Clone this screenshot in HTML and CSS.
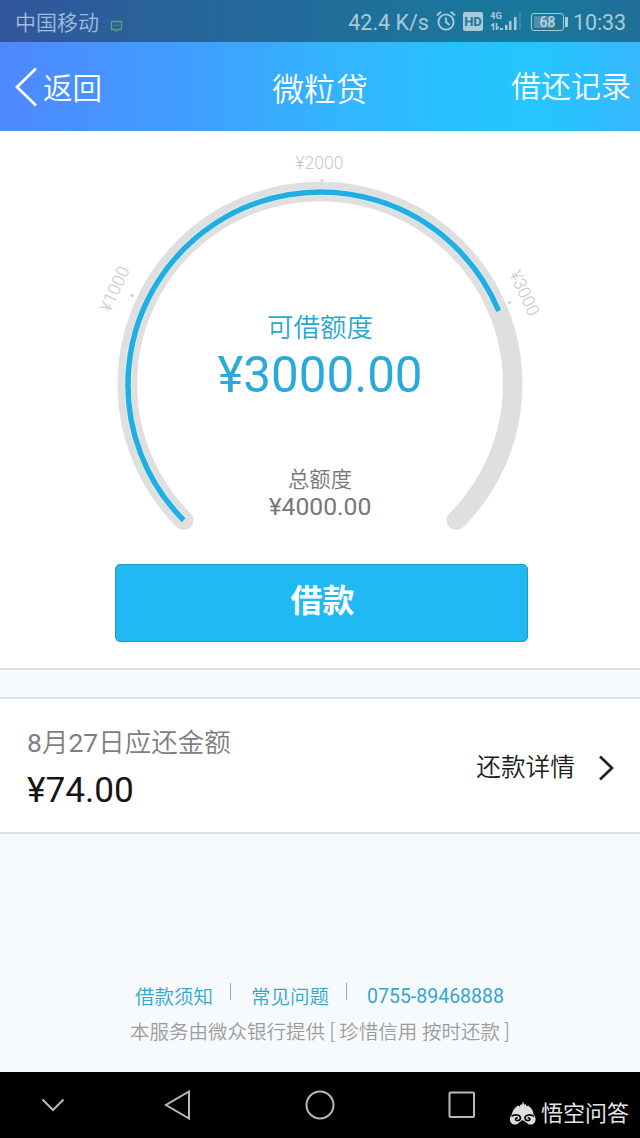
FILE: index.html
```html
<!DOCTYPE html>
<html lang="zh-CN">
<head>
<meta charset="utf-8">
<title>微粒贷</title>
<link rel="stylesheet" href="styles.css">
</head>
<body>
<div class="top">
  <div class="status">
    <span class="carrier">中国移动</span>
    <svg class="msg" width="20" height="24" viewBox="0 0 20 24" fill="none"><path d="M3 11V8a6 6 0 0 1 12 0" stroke="#1d65a8" stroke-width="2"/><path d="M6.500 11.500h10v8h-3.500l-1.500 1.500-1.500-1.500h-3.500z" stroke="#60a07d" stroke-width="1.300"/><path d="M8.500 15.500h1m1.500 0h1m1.500 0h1" stroke="#60a07d" stroke-width="1.300"/></svg>
    <span class="speed">42.4 K/s</span>
    <svg class="alarm" width="20" height="22" viewBox="0 0 20 22" fill="none" stroke="#a9cad9" stroke-width="1.900"><circle cx="10" cy="12" r="7.600"/><path d="M10 7.500V12l3.500 3M1 5.500l4-3.700M19 5.500l-4-3.700"/></svg>
    <span class="hd">HD</span>
    <svg class="signal" width="32" height="22" viewBox="0 0 32 22"><text x="0" y="9" class="net">4G</text><path d="M3.500 20v-7m-2.500 3 2.500-2.500M6.500 13v7m2.500-3-2.500 2.500" fill="none" stroke="#a9cad9" stroke-width="1.500"/><path d="M10 18h3v2h-3zM15 15h2.500v5h-2.500zM19 11h2.500v9h-2.500zM24 7h2.500v13h-2.500z" fill="#a9cad9"/><path d="M29 2h2v18h-2z" fill="#3d87a6"/></svg>
    <span class="battery"><span class="level">68</span></span>
    <span class="clock">10:33</span>
  </div>
  <header class="bar">
    <a class="back"><svg width="24" height="40" viewBox="0 0 24 40" fill="none" stroke="#fff" stroke-width="2.700"><path d="M22 1.500 3 20l19 18.500"/></svg><span>返回</span></a>
    <h1 class="title">微粒贷</h1>
    <a class="record">借还记录</a>
  </header>
</div>
<main class="main">
  <section class="quota">
    <div class="gauge">
      <svg class="dial" width="460" height="410" viewBox="90 131 460 410" fill="none">
        <path d="M183.700 520.300A192.700 192.700 0 1 1 456.300 520.300" stroke="#dfdfdf" stroke-width="19.500" stroke-linecap="round"/>
        <path d="M183.700 520.300A192.700 192.700 0 1 1 498.700 311" stroke="#e4f2f8" stroke-width="7"/>
        <path d="M183.700 520.300A192.700 192.700 0 1 1 498.700 311" stroke="#22aee2" stroke-width="5.500"/>
        <g fill="#d5d5d5"><circle cx="132" cy="295.500" r="1.800"/><circle cx="322" cy="180.500" r="1.500"/><circle cx="509.500" cy="302.500" r="1.800"/></g>
        <g class="mark"><text x="319.500" y="169">¥2000</text><text transform="translate(120 291.500) rotate(-65)">¥1000</text><text transform="translate(519 295.500) rotate(65)">¥3000</text></g>
      </svg>
      <div class="figures">
        <p class="available">可借额度</p>
        <p class="amount">¥3000.00</p>
        <p class="total">总额度</p>
        <p class="limit">¥4000.00</p>
      </div>
    </div>
    <button class="borrow">借款</button>
  </section>
  <section class="bill">
    <div class="due"><p class="date"><b>8</b>月<b>27</b>日应还金额</p><p class="sum">¥74.00</p></div>
    <a class="detail"><span>还款详情</span><svg width="18" height="28" viewBox="0 0 18 28" fill="none" stroke="#222" stroke-width="2.700"><path d="m2 2.500 12 11.500L2 25.500"/></svg></a>
  </section>
  <footer class="foot">
    <div class="links"><a>借款须知</a><i></i><a>常见问题</a><i></i><a class="phone">0755-89468888</a></div>
    <p class="service">本服务由微众银行提供 [ 珍惜信用 按时还款 ]</p>
  </footer>
</main>
<nav class="nav">
  <svg class="down" width="26" height="16" viewBox="0 0 26 16"><path d="m2.500 2.500 10.500 10.500L23.500 2.500"/></svg>
  <svg class="prev" width="28" height="32" viewBox="0 0 28 32"><path d="M25 2.500v27L2 16z"/></svg>
  <svg class="home" width="30" height="30" viewBox="0 0 30 30"><circle cx="15" cy="15" r="13.500"/></svg>
  <svg class="recent" width="28" height="28" viewBox="0 0 28 28"><rect x="1.500" y="1.500" width="24.500" height="24.500" rx="1"/></svg>
  <div class="brand">
    <svg width="27" height="26" viewBox="0 0 27 26"><path class="solid" d="M3 13C4 8 7 6 9 4.500l1.500 1L12 3l1 1L14 .500l1.500 3.500 1-1L18 5.500l1-1C21 6 24 8 24.500 13c2.500 3 2.500 6 1.500 8-1.500 3-6 3.500-8 1l-4.500-3L9.500 22c-2 2.500-6.500 2-8-1-1-2-1-5 1.500-8z"/><path class="cut" d="M2.500 15.500c3-2.500 9-2 9 1.500 0 3-5 3.500-5 1 0-1.200 1.500-1.500 2-.500M25 15.500c-3-2.500-9-2-9 1.500 0 3 5 3.500 5 1 0-1.200-1.500-1.500-2-.500"/></svg>
    <span>悟空问答</span>
  </div>
</nav>
</body>
</html>
```
FILE: styles.css
```css
* { box-sizing: border-box; }
body { margin: 0; width: 640px; height: 1138px; display: flex; flex-direction: column; overflow: hidden; background: #f6fafd; font-family: Roboto, "Noto Sans CJK SC", sans-serif; font-weight: 400; }
p, h1 { margin: 0; font-weight: 400; white-space: nowrap; }
svg { display: block; flex: none; }
span, a { white-space: nowrap; }

.status { height: 42px; display: flex; align-items: center; padding: 2px 14px 0 15px; color: #a9cad9; background: linear-gradient(90deg, #31559c, #27649a 28%, #206f9b 55%, #18789b 82%, #206f98); }
.carrier { font-size: 21px; line-height: 30px; padding-top: 2px; color: #a3bcdd; font-weight: 350; }
.msg { margin-left: 6px; margin-top: 0; }
.speed { margin-left: auto; font-size: 21.5px; }
.alarm { margin-left: 7px; margin-top: -2px; }
.hd { margin-left: 7px; width: 20px; height: 19px; margin-top: -2px; border-radius: 2px; background: #a9cad9; color: #1c759b; font-size: 13px; font-weight: 700; line-height: 19px; text-align: center; }
.signal { margin-left: 7px; margin-top: -3px; }
.net { font: 700 9.500px Roboto, sans-serif; fill: #a9cad9; }
.battery { margin-left: 9px; width: 33px; height: 18px; margin-top: -1px; padding: 2px; border: 1px solid #a9cad9; border-radius: 3px; position: relative; }
.battery::after { content: ""; position: absolute; left: 33px; top: 3px; width: 3px; height: 10px; background: #a9cad9; }
.level { display: block; height: 12px; background: linear-gradient(90deg, #528fac 70%, transparent 70%); color: #cbe2eb; font-size: 14px; line-height: 13px; text-align: center; }
.clock { margin-left: 9px; font-size: 21.500px; letter-spacing: -.1px; }

.bar { height: 89px; display: grid; grid-template-columns: 1fr auto 1fr; align-items: center; padding: 0 9px 0 14px; color: #fff; background: linear-gradient(90deg, #4e88ff, #419cff 28%, #35b2ff 50%, #28c0ff 70%, #24c6ff 84%, #37b7ff); }
.back { display: flex; align-items: center; gap: 5px; font-size: 29.500px; font-weight: 350; }
.back span { padding-bottom: 2px; }
.title { font-size: 31.800px; font-weight: 350; line-height: 46px; padding-top: 6px; margin: 0 5px 0 0; }
.record { justify-self: end; font-size: 30px; font-weight: 350; padding-bottom: 5px; }

.main { flex: 1; display: flex; flex-direction: column; }
.quota { height: 539px; display: flex; flex-direction: column; background: #fff; border-bottom: 2px solid #dfe0e1; }
.gauge { display: grid; height: 433px; flex: none; justify-content: center; }
.dial, .figures { grid-area: 1 / 1; }
.mark { font: 300 17.500px Roboto, sans-serif; fill: #c8c8c8; text-anchor: middle; }
.figures { display: flex; flex-direction: column; align-items: center; padding-top: 177px; color: #777; }
.available { font-size: 26.500px; line-height: 40px; color: #2ba8d0; font-weight: 350; }
.amount { font-size: 49.300px; line-height: 55px; color: #2aaadc; }
.total { margin-top: 64px; font-size: 21.300px; line-height: 26px; font-weight: 350; }
.limit { font-size: 24.700px; line-height: 28px; }
.borrow { align-self: center; width: 413px; height: 78px; margin-left: 3px; padding: 0 0 11px 2px; border: 1px solid #2399c4; border-radius: 5px; background: #20b9f4; color: #fff; font: 700 32px "Noto Sans CJK SC", sans-serif; }

.bill { margin-top: 27px; height: 137px; border: solid #dfe0e1; border-width: 2px 0; background: #fff; display: flex; align-items: center; justify-content: space-between; padding: 0 24px 0 27px; }
.due { padding-top: 8px; }
.date { font-size: 26.500px; line-height: 40px; color: #7e7e7e; font-weight: 350; }
.date b { font-weight: 400; }
.sum { font-size: 35.200px; line-height: 54px; color: #151515; }
.detail { display: flex; align-items: center; gap: 23px; font-size: 24.700px; color: #1c1c1c; font-weight: 350; }
.detail span { padding-bottom: 2px; }
.detail svg { margin-top: 4px; }

.foot { padding-top: 144px; }
.links { display: flex; align-items: center; padding-left: 135px; height: 34px; font-size: 19.500px; color: #32a7c9; font-weight: 350; }
.phone { font-weight: 400; padding-top: 2px; }
.links i { width: 1px; height: 17px; margin: -7px 20px 0 17px; background: #a0a5a8; }
.service { padding-left: 130px; font-size: 19.500px; line-height: 36px; padding-top: 3px; color: #9c9c9c; font-weight: 350; }

.nav { height: 66px; display: flex; align-items: center; background: #000; fill: none; stroke: #b9b9b9; stroke-width: 2; }
.down { margin-left: 40px; }
.prev { margin-left: 98px; }
.home { margin-left: 113px; }
.recent { margin-left: 113px; }
.brand { margin: 18px 0 0 33px; display: flex; align-items: center; gap: 5px; color: #e4e4e4; font-size: 22px; line-height: 26px; font-weight: 400; }
.solid { fill: #dedede; stroke: none; }
.cut { stroke: #000; stroke-width: 1.600; }
```
